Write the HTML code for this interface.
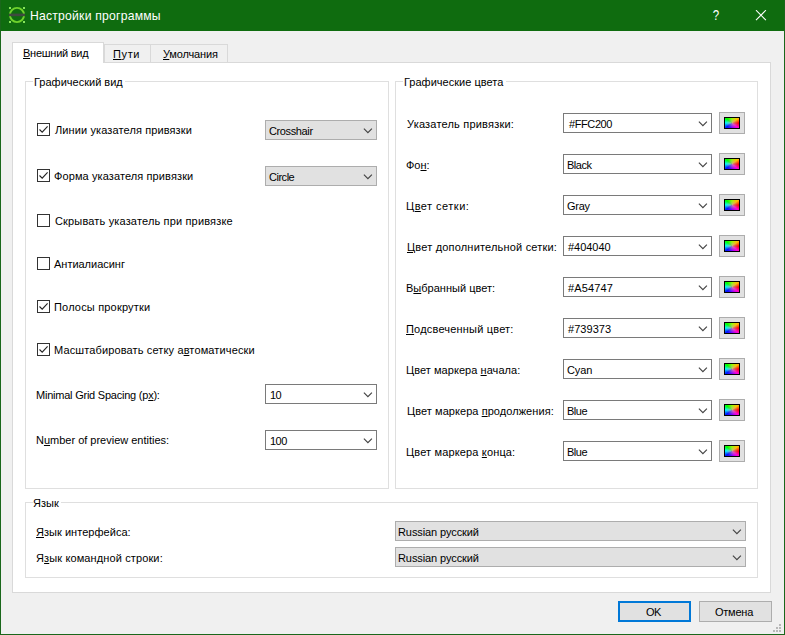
<!DOCTYPE html>
<html lang="ru"><head><meta charset="utf-8"><title>Настройки программы</title><style>
html,body{margin:0;padding:0;}
body{width:785px;height:635px;overflow:hidden;background:#f0f0f0;position:relative;font-family:"Liberation Sans",sans-serif;font-size:11px;color:#000;}
.abs{position:absolute;}
#win{position:absolute;left:0;top:0;width:785px;height:635px;box-sizing:border-box;background:#f0f0f0;overflow:hidden;}
#bl{position:absolute;left:0;top:0;width:1px;height:635px;background:#1a671b;}
#br{position:absolute;left:784px;top:0;width:1px;height:635px;background:#1a671b;}
#bb{position:absolute;left:0;top:634px;width:785px;height:1px;background:#1a671b;}
#title{position:absolute;left:0;top:0;width:785px;height:31px;background:#0f6c0f;}
.t{position:absolute;white-space:nowrap;height:14px;line-height:14px;font-size:11px;}
u{text-decoration:underline;text-underline-offset:1px;text-decoration-thickness:1px;}
#pane{position:absolute;left:12px;top:62px;width:759px;height:531px;box-sizing:border-box;background:#fff;border:1px solid #d9d9d9;}
.tab{position:absolute;box-sizing:border-box;border:1px solid #d9d9d9;border-bottom:none;background:#f0f0f0;}
.tab.sel{background:#fff;}
.gb{position:absolute;box-sizing:border-box;border:1px solid #dfdfdf;}
.gtbg{position:absolute;height:5px;background:#fff;}
.cb{position:absolute;width:13px;height:13px;box-sizing:border-box;border:1px solid #333;background:#fff;}
.cb svg{position:absolute;left:0;top:0;}
.combo{position:absolute;box-sizing:border-box;height:20px;border:1px solid #adadad;background:#e1e1e1;}
.combo.ed{border-color:#7a7a7a;background:#fff;}
.combo svg{position:absolute;right:3px;top:7px;}
.btn{position:absolute;box-sizing:border-box;border:1px solid #adadad;background:#e1e1e1;}
.btn.def{border:2px solid #0078d7;}
.cbtn{position:absolute;box-sizing:border-box;width:26px;height:22px;border:1px solid #adadad;background:#e1e1e1;}
.cico{position:absolute;left:4px;top:4px;width:16px;height:12px;box-sizing:border-box;border:1px solid #000;background:radial-gradient(ellipse at 50% 50%, rgba(190,170,170,0.75) 0%, rgba(190,170,170,0) 65%), conic-gradient(from 0deg at 50% 50%, hsl(85,100%,50%) 0deg, hsl(45,100%,50%) 53deg, hsl(0,100%,50%) 90deg, hsl(310,100%,50%) 127deg, hsl(270,100%,50%) 180deg, hsl(235,100%,50%) 233deg, hsl(180,100%,50%) 270deg, hsl(120,100%,50%) 307deg, hsl(85,100%,50%) 360deg);}
</style></head><body><div id="win">
<div id="title"></div>
<svg class="abs" style="left:8px;top:6px" width="18" height="18" viewBox="0 0 18 18"><circle cx="9" cy="9" r="7.1" fill="none" stroke="#6fd22d" stroke-width="1.9"/><rect x="1" y="1" width="2" height="2" fill="#86e45c"/><rect x="15" y="1" width="2" height="2" fill="#86e45c"/><rect x="1" y="15" width="2" height="2" fill="#86e45c"/><rect x="15" y="15" width="2" height="2" fill="#86e45c"/><rect x="1" y="7.6" width="16" height="2.6" fill="#3f4a3f"/></svg>
<div class="t" style="left:30px;top:7px;letter-spacing:0.211px;font-size:12.2px;color:#fff;height:18px;line-height:18px;">Настройки программы</div>
<div class="abs" style="left:707.8px;top:6px;width:16px;height:18px;line-height:18px;font-size:14.4px;color:#fff;text-align:center;transform:scaleX(0.8)">?</div>
<svg class="abs" style="left:755px;top:10px" width="12" height="12" viewBox="0 0 12 12"><path d="M1 0.2 L10.9 10.1 M10.9 0.2 L1 10.1" stroke="#fff" stroke-width="1.1" fill="none"/></svg>
<div id="pane"></div>
<div class="tab" style="left:104px;top:44px;width:47px;height:18px"></div>
<div class="tab" style="left:150px;top:44px;width:78px;height:18px"></div>
<div class="tab sel" style="left:12px;top:42px;width:92px;height:21px"></div>
<div class="t" style="left:23px;top:46px;letter-spacing:-0.250px;"><u>В</u>нешний вид</div>
<div class="t" style="left:113px;top:47px;letter-spacing:0.633px;"><u>П</u>ути</div>
<div class="t" style="left:163px;top:47px;letter-spacing:-0.150px;"><u>У</u>молчания</div>
<div class="gb" style="left:25px;top:81px;width:364px;height:408px"></div>
<div class="gtbg" style="left:33px;top:79px;width:92px"></div>
<div class="t" style="left:34px;top:75px;letter-spacing:0.007px;">Графический вид</div>
<div class="gb" style="left:395px;top:81px;width:363px;height:408px"></div>
<div class="gtbg" style="left:403px;top:79px;width:103px"></div>
<div class="t" style="left:404px;top:75px;letter-spacing:0.012px;">Графические цвета</div>
<div class="gb" style="left:25px;top:502px;width:733px;height:76px"></div>
<div class="gtbg" style="left:33px;top:500px;width:28px"></div>
<div class="t" style="left:33px;top:496px;">Язык</div>
<div class="cb" style="left:37px;top:123px"><svg width="11" height="11" viewBox="0 0 11 11"><path d="M1.5 5.5 L4.2 8.2 L9.6 2.4" fill="none" stroke="#222" stroke-width="1.1"/></svg></div>
<div class="t" style="left:55px;top:123px;letter-spacing:0.113px;">Линии указателя привязки</div>
<div class="cb" style="left:37px;top:169px"><svg width="11" height="11" viewBox="0 0 11 11"><path d="M1.5 5.5 L4.2 8.2 L9.6 2.4" fill="none" stroke="#222" stroke-width="1.1"/></svg></div>
<div class="t" style="left:54px;top:169px;letter-spacing:0.104px;">Форма указателя привязки</div>
<div class="cb" style="left:37px;top:214px"></div>
<div class="t" style="left:55px;top:214px;letter-spacing:0.160px;">Скрывать указатель при привязке</div>
<div class="cb" style="left:37px;top:257px"></div>
<div class="t" style="left:54px;top:257px;letter-spacing:-0.018px;">Антиалиасинг</div>
<div class="cb" style="left:37px;top:300px"><svg width="11" height="11" viewBox="0 0 11 11"><path d="M1.5 5.5 L4.2 8.2 L9.6 2.4" fill="none" stroke="#222" stroke-width="1.1"/></svg></div>
<div class="t" style="left:54px;top:300px;letter-spacing:0.180px;">Полосы прокрутки</div>
<div class="cb" style="left:37px;top:343px"><svg width="11" height="11" viewBox="0 0 11 11"><path d="M1.5 5.5 L4.2 8.2 L9.6 2.4" fill="none" stroke="#222" stroke-width="1.1"/></svg></div>
<div class="t" style="left:54px;top:343px;letter-spacing:0.130px;">Масштабировать сетку а<u>в</u>томатически</div>
<div class="t" style="left:36px;top:388px;letter-spacing:-0.228px;">Minimal Grid Spacing (p<u>x</u>):</div>
<div class="t" style="left:36px;top:433px;letter-spacing:-0.008px;">N<u>u</u>mber of preview entities:</div>
<div class="combo" style="left:265px;top:120px;width:112px"><svg width="10" height="6" viewBox="0 0 10 6"><path d="M0.9 0.6 L4.9 4.6 L8.9 0.6" fill="none" stroke="#444" stroke-width="1.15"/></svg></div>
<div class="t" style="left:269px;top:124px;letter-spacing:-0.375px;">Crosshair</div>
<div class="combo" style="left:265px;top:166px;width:112px"><svg width="10" height="6" viewBox="0 0 10 6"><path d="M0.9 0.6 L4.9 4.6 L8.9 0.6" fill="none" stroke="#444" stroke-width="1.15"/></svg></div>
<div class="t" style="left:269px;top:170px;letter-spacing:-0.480px;">Circle</div>
<div class="combo ed" style="left:265px;top:384px;width:112px"><svg width="10" height="6" viewBox="0 0 10 6"><path d="M0.9 0.6 L4.9 4.6 L8.9 0.6" fill="none" stroke="#444" stroke-width="1.15"/></svg></div>
<div class="t" style="left:270px;top:388px;letter-spacing:-0.500px;">10</div>
<div class="combo ed" style="left:265px;top:430px;width:112px"><svg width="10" height="6" viewBox="0 0 10 6"><path d="M0.9 0.6 L4.9 4.6 L8.9 0.6" fill="none" stroke="#444" stroke-width="1.15"/></svg></div>
<div class="t" style="left:270px;top:434px;letter-spacing:-0.500px;">100</div>
<div class="t" style="left:407px;top:117px;letter-spacing:0.194px;">Указатель привязки:</div>
<div class="combo ed" style="left:563px;top:113px;width:149px"><svg width="10" height="6" viewBox="0 0 10 6"><path d="M0.9 0.6 L4.9 4.6 L8.9 0.6" fill="none" stroke="#444" stroke-width="1.15"/></svg></div>
<div class="t" style="left:569px;top:117px;letter-spacing:-0.400px;">#FFC200</div>
<div class="cbtn" style="left:719px;top:112px"><div class="cico"></div></div>
<div class="t" style="left:406px;top:158px;">Фо<u>н</u>:</div>
<div class="combo ed" style="left:563px;top:154px;width:149px"><svg width="10" height="6" viewBox="0 0 10 6"><path d="M0.9 0.6 L4.9 4.6 L8.9 0.6" fill="none" stroke="#444" stroke-width="1.15"/></svg></div>
<div class="t" style="left:567px;top:158px;letter-spacing:-0.475px;">Black</div>
<div class="cbtn" style="left:719px;top:153px"><div class="cico"></div></div>
<div class="t" style="left:406px;top:199px;letter-spacing:0.480px;">Ц<u>в</u>ет сетки:</div>
<div class="combo ed" style="left:563px;top:195px;width:149px"><svg width="10" height="6" viewBox="0 0 10 6"><path d="M0.9 0.6 L4.9 4.6 L8.9 0.6" fill="none" stroke="#444" stroke-width="1.15"/></svg></div>
<div class="t" style="left:567px;top:199px;letter-spacing:-0.267px;">Gray</div>
<div class="cbtn" style="left:719px;top:194px"><div class="cico"></div></div>
<div class="t" style="left:407px;top:240px;letter-spacing:0.188px;"><u>Ц</u>вет дополнительной сетки:</div>
<div class="combo ed" style="left:563px;top:236px;width:149px"><svg width="10" height="6" viewBox="0 0 10 6"><path d="M0.9 0.6 L4.9 4.6 L8.9 0.6" fill="none" stroke="#444" stroke-width="1.15"/></svg></div>
<div class="t" style="left:568px;top:240px;letter-spacing:-0.033px;">#404040</div>
<div class="cbtn" style="left:719px;top:235px"><div class="cico"></div></div>
<div class="t" style="left:406px;top:281px;letter-spacing:0.014px;">В<u>ы</u>бранный цвет:</div>
<div class="combo ed" style="left:563px;top:277px;width:149px"><svg width="10" height="6" viewBox="0 0 10 6"><path d="M0.9 0.6 L4.9 4.6 L8.9 0.6" fill="none" stroke="#444" stroke-width="1.15"/></svg></div>
<div class="t" style="left:568px;top:281px;letter-spacing:0.150px;">#A54747</div>
<div class="cbtn" style="left:719px;top:276px"><div class="cico"></div></div>
<div class="t" style="left:406px;top:322px;letter-spacing:0.188px;"><u>П</u>одсвеченный цвет:</div>
<div class="combo ed" style="left:563px;top:318px;width:149px"><svg width="10" height="6" viewBox="0 0 10 6"><path d="M0.9 0.6 L4.9 4.6 L8.9 0.6" fill="none" stroke="#444" stroke-width="1.15"/></svg></div>
<div class="t" style="left:568px;top:322px;letter-spacing:0.050px;">#739373</div>
<div class="cbtn" style="left:719px;top:317px"><div class="cico"></div></div>
<div class="t" style="left:406px;top:363px;letter-spacing:0.053px;">Цвет маркера <u>н</u>ачала:</div>
<div class="combo ed" style="left:563px;top:359px;width:149px"><svg width="10" height="6" viewBox="0 0 10 6"><path d="M0.9 0.6 L4.9 4.6 L8.9 0.6" fill="none" stroke="#444" stroke-width="1.15"/></svg></div>
<div class="t" style="left:567px;top:363px;letter-spacing:-0.100px;">Cyan</div>
<div class="cbtn" style="left:719px;top:358px"><div class="cico"></div></div>
<div class="t" style="left:407px;top:404px;letter-spacing:0.062px;">Цвет маркера <u>п</u>родолжения:</div>
<div class="combo ed" style="left:563px;top:400px;width:149px"><svg width="10" height="6" viewBox="0 0 10 6"><path d="M0.9 0.6 L4.9 4.6 L8.9 0.6" fill="none" stroke="#444" stroke-width="1.15"/></svg></div>
<div class="t" style="left:567px;top:404px;letter-spacing:-0.500px;">Blue</div>
<div class="cbtn" style="left:719px;top:399px"><div class="cico"></div></div>
<div class="t" style="left:406px;top:445px;letter-spacing:0.150px;">Цвет маркера <u>к</u>онца:</div>
<div class="combo ed" style="left:563px;top:441px;width:149px"><svg width="10" height="6" viewBox="0 0 10 6"><path d="M0.9 0.6 L4.9 4.6 L8.9 0.6" fill="none" stroke="#444" stroke-width="1.15"/></svg></div>
<div class="t" style="left:567px;top:445px;letter-spacing:-0.500px;">Blue</div>
<div class="cbtn" style="left:719px;top:440px"><div class="cico"></div></div>
<div class="t" style="left:36px;top:525px;letter-spacing:0.033px;"><u>Я</u>зык интерфейса:</div>
<div class="t" style="left:36px;top:551px;letter-spacing:0.119px;">Я<u>з</u>ык командной строки:</div>
<div class="combo" style="left:395px;top:521px;width:351px"><svg width="10" height="6" viewBox="0 0 10 6"><path d="M0.9 0.6 L4.9 4.6 L8.9 0.6" fill="none" stroke="#444" stroke-width="1.15"/></svg></div>
<div class="t" style="left:398px;top:525px;letter-spacing:-0.093px;">Russian русский</div>
<div class="combo" style="left:395px;top:547px;width:351px"><svg width="10" height="6" viewBox="0 0 10 6"><path d="M0.9 0.6 L4.9 4.6 L8.9 0.6" fill="none" stroke="#444" stroke-width="1.15"/></svg></div>
<div class="t" style="left:398px;top:551px;letter-spacing:-0.093px;">Russian русский</div>
<div class="btn def" style="left:618px;top:601px;width:73px;height:21px"></div>
<div class="t" style="left:646px;top:605px;letter-spacing:-0.500px;">OK</div>
<div class="btn" style="left:699px;top:601px;width:73px;height:21px"></div>
<div class="t" style="left:715px;top:605px;letter-spacing:-0.240px;">Отмена</div>
<svg class="abs" style="left:0;top:0" width="785" height="635"><rect x="779" y="624" width="2" height="2" fill="#b8b8b8"/><rect x="776" y="627" width="2" height="2" fill="#b8b8b8"/><rect x="779" y="627" width="2" height="2" fill="#b8b8b8"/><rect x="773" y="630" width="2" height="2" fill="#b8b8b8"/><rect x="776" y="630" width="2" height="2" fill="#b8b8b8"/><rect x="779" y="630" width="2" height="2" fill="#b8b8b8"/></svg>
<div id="bl"></div><div id="br"></div><div id="bb"></div>
</div></body></html>
